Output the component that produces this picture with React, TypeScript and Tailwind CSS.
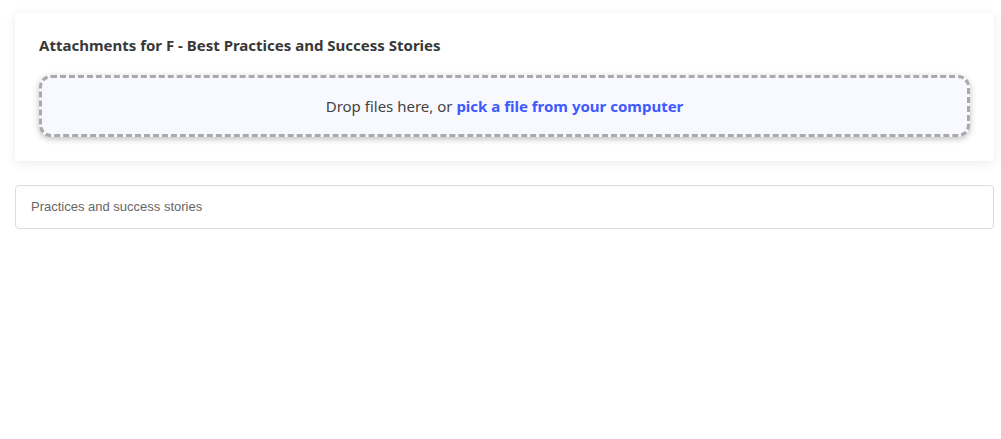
import React from 'react';

export default function App() {
  return (
    <div className="min-h-screen bg-white pl-[15px] pr-[7px] pt-[13px]" style={{ fontFamily: '"Noto Sans", sans-serif' }}>
      <div className="rounded-[4px] bg-white px-6 pb-6 pt-[22px] shadow-[0_2px_12px_rgba(0,0,0,0.08)]">
        <h2 className="text-[15px] font-bold leading-5 text-[#383838]">
          Attachments for F - Best Practices and Success Stories
        </h2>
        <div className="mt-5 flex h-[62px] items-center justify-center rounded-[12px] border-[3px] border-dashed border-[#aaaaaa] bg-[#f8f9ff] shadow-[0_2px_6px_rgba(0,0,0,0.25)]">
          <p className="text-[15px] text-[#444]">
            Drop files here, or{' '}
            <span className="cursor-pointer font-bold text-[#3d5afe]">pick a file from your computer</span>
          </p>
        </div>
      </div>
      <div
        className="mt-6 flex h-[44px] items-center rounded-[4px] border border-[#dcdcdc] px-[15px] text-[13px] text-[#666]"
        style={{ fontFamily: '"Liberation Sans", Arial, sans-serif' }}
      >
        Practices and success stories
      </div>
    </div>
  );
}
